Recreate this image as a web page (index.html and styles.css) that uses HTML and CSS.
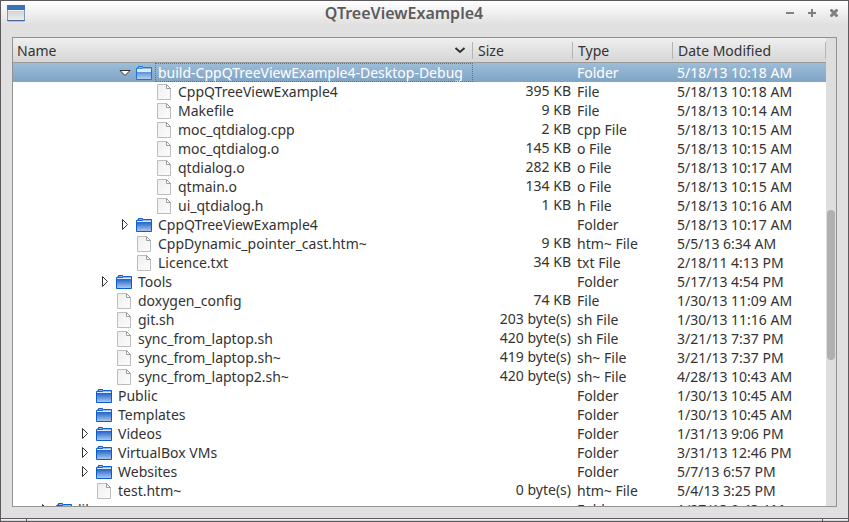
FILE: index.html
```
<!DOCTYPE html>
<html lang="en">
<head>
<meta charset="utf-8">
<title>QTreeViewExample4</title>
<link rel="stylesheet" href="styles.css">
<script src="tree.js" defer></script>
</head>
<body>
<svg class="defs" aria-hidden="true">
  <defs>
    <linearGradient id="blue" x1="0" y1="0" x2="0" y2="1"><stop offset=".25" stop-color="#1c5fc4"/><stop offset="1" stop-color="#b0cdf3"/></linearGradient>
    <linearGradient id="pale" x1="0" y1="0" x2="0" y2="1"><stop offset=".35" stop-color="#4a8ad8"/><stop offset="1" stop-color="#b8d4f4"/></linearGradient>
    <linearGradient id="paper" x1="0" y1="0" x2="1" y2="1"><stop offset="0" stop-color="#eeeeee"/><stop offset="1" stop-color="#fdfdfd"/></linearGradient>
    <linearGradient id="pane" x1="0" y1="0" x2="0" y2="1"><stop offset="0" stop-color="#c8c8c8"/><stop offset="1" stop-color="#ececec"/></linearGradient>
  </defs>
  <symbol id="folder" viewBox="0 0 16 14">
    <path d="M.5 13.5V2.5H1.500L2.500 .5H6.500L7.500 1.500H15.500V13.500Z" fill="url(#blue)" stroke="#0b5ccc"/>
    <path d="M1 3H15V4H1Z" fill="#dcebfc"/><path d="M3 1.500H6L7 2.500H15" fill="none" stroke="#8fbcf0"/>
  </symbol>
  <symbol id="folder-open" viewBox="0 0 16 14">
    <path d="M.5 13.5V2.5H1.500L2.500 .5H6.500L7.500 1.500H15.500V13.500Z" fill="url(#pale)" stroke="#2375cc"/>
    <path d="M1 3H15V6H1Z" fill="#dceafa"/><path d="M3 1.500H6L7 2.500H15" fill="none" stroke="#8dbbed"/>
  </symbol>
  <symbol id="file" viewBox="0 0 16 16">
    <path d="M1.500 .5H10.500L14.500 4.500V15.500H1.500Z" fill="url(#paper)" stroke="#bdbdbd"/>
    <path d="M10.500 .5V4.500H14.500Z" fill="#fff" stroke="#9c9c9c"/>
  </symbol>
  <symbol id="closed" viewBox="0 0 8 13"><path d="M1.500 1.500V11.500L6.500 6.500Z" fill="#fff" stroke="#333"/></symbol>
  <symbol id="opened" viewBox="0 0 12 8"><path d="M1 1.500H11L6 6.500Z" fill="#fff" stroke="#333"/></symbol>
</svg>
<main class="window">
  <header class="titlebar">
    <svg class="app-icon" viewBox="0 0 18 17" aria-hidden="true">
      <path d="M.5 .5H17.500V16H.5Z" fill="url(#pane)" stroke="#8496b0"/><path d="M0 0H18V5H0Z" fill="#3c72b8"/><path d="M1 5.500H17" stroke="#edf3fa"/><path d="M0 15.500H18" stroke="#4a6ba0"/>
    </svg>
    <h1>QTreeViewExample4</h1>
    <div class="controls">
      <button type="button" aria-label="Minimize"><svg viewBox="0 0 8 8"><path d="M0 4H8"/></svg></button>
      <button type="button" aria-label="Maximize"><svg viewBox="0 0 8 8"><path d="M0 4H8M4 0V8"/></svg></button>
      <button type="button" aria-label="Close"><svg viewBox="0 0 8 8"><path d="M.5 .5L7.500 7.500M7.500 .5L.5 7.500" stroke-width="3"/></svg></button>
    </div>
  </header>
  <section class="tree">
    <div class="view">
      <table>
        <colgroup><col><col class="col-small"><col class="col-small"><col class="col-date"></colgroup>
        <thead><tr>
          <th scope="col"><div class="sort">Name<svg viewBox="0 0 12 8" aria-hidden="true"><path d="M1.500 2L6 6L10.500 2"/></svg></div></th>
          <th scope="col">Size</th><th scope="col">Type</th><th scope="col">Date Modified</th>
        </tr></thead>
        <tbody id="rows"></tbody>
      </table>
    </div>
    <div class="scrollbar"><div class="thumb"></div></div>
  </section>
  <footer class="grip"></footer>
</main>
</body>
</html>
```
FILE: tree.js
```
// level, arrow, name, size, type, date
const entries = [
  [4, "opened", "build-CppQTreeViewExample4-Desktop-Debug", "", "Folder", "5/18/13 10:18 AM"],
  [5, "", "CppQTreeViewExample4", "395 KB", "File", "5/18/13 10:18 AM"],
  [5, "", "Makefile", "9 KB", "File", "5/18/13 10:14 AM"],
  [5, "", "moc_qtdialog.cpp", "2 KB", "cpp File", "5/18/13 10:15 AM"],
  [5, "", "moc_qtdialog.o", "145 KB", "o File", "5/18/13 10:15 AM"],
  [5, "", "qtdialog.o", "282 KB", "o File", "5/18/13 10:17 AM"],
  [5, "", "qtmain.o", "134 KB", "o File", "5/18/13 10:15 AM"],
  [5, "", "ui_qtdialog.h", "1 KB", "h File", "5/18/13 10:16 AM"],
  [4, "closed", "CppQTreeViewExample4", "", "Folder", "5/18/13 10:17 AM"],
  [4, "", "CppDynamic_pointer_cast.htm~", "9 KB", "htm~ File", "5/5/13 6:34 AM"],
  [4, "", "Licence.txt", "34 KB", "txt File", "2/18/11 4:13 PM"],
  [3, "closed", "Tools", "", "Folder", "5/17/13 4:54 PM"],
  [3, "", "doxygen_config", "74 KB", "File", "1/30/13 11:09 AM"],
  [3, "", "git.sh", "203 byte(s)", "sh File", "1/30/13 11:16 AM"],
  [3, "", "sync_from_laptop.sh", "420 byte(s)", "sh File", "3/21/13 7:37 PM"],
  [3, "", "sync_from_laptop.sh~", "419 byte(s)", "sh~ File", "3/21/13 7:37 PM"],
  [3, "", "sync_from_laptop2.sh~", "420 byte(s)", "sh~ File", "4/28/13 10:43 AM"],
  [2, "", "Public", "", "Folder", "1/30/13 10:45 AM"],
  [2, "", "Templates", "", "Folder", "1/30/13 10:45 AM"],
  [2, "closed", "Videos", "", "Folder", "1/31/13 9:06 PM"],
  [2, "closed", "VirtualBox VMs", "", "Folder", "3/31/13 12:46 PM"],
  [2, "closed", "Websites", "", "Folder", "5/7/13 6:57 PM"],
  [2, "", "test.htm~", "0 byte(s)", "htm~ File", "5/4/13 3:25 PM"],
  [0, "closed", "lib", "", "Folder", "1/27/13 9:43 AM"]
];

document.getElementById("rows").innerHTML = entries.map(([level, arrow, name, size, type, date]) => {
  const icon = type !== "Folder" ? "file" : arrow === "opened" ? "folder-open" : "folder";
  const toggle = arrow
    ? `<button type="button" class="toggle" aria-label="${name}"><svg class="${arrow}"><use href="#${arrow}"/></svg></button>`
    : `<span class="toggle"></span>`;
  return `<tr class="${arrow === "opened" ? "selected" : ""}">
    <td><div class="name level-${level}">${toggle}<svg class="${icon}"><use href="#${icon}"/></svg><span class="label">${name}</span></div></td>
    <td class="size">${size}</td><td>${type}</td><td>${date}</td></tr>`;
}).join("");
```
FILE: styles.css
```
* { box-sizing: border-box; }
body { margin: 0; font: 14px/19px "Noto Sans", "Open Sans", sans-serif; color: #333; background: #e0e0e0; }
button { padding: 0; border: 0; color: inherit; background: none; }
.defs { position: absolute; width: 0; height: 0; }
.window { display: flex; flex-direction: column; height: 100vh; border: 1px solid #5c5a5c; background: #e0e0e0; }

.titlebar { display: grid; grid-template-columns: 40px 1fr 80px; align-items: center; height: 24px; flex: none; padding: 0 7px 0 6px; background: linear-gradient(#fff, #e0e0e0); }
.app-icon { width: 18px; height: 17px; }
.titlebar h1 { margin: 0; font-size: 16px; font-weight: 600; line-height: 24px; color: #5c5c5c; text-align: center; }
.controls { display: flex; justify-content: flex-end; gap: 8px; }
.controls button { display: flex; align-items: center; justify-content: center; width: 14px; height: 14px; }
.controls svg { width: 8px; height: 8px; fill: none; stroke: #808080; stroke-width: 2; }

.tree { display: flex; flex: 1; min-height: 0; margin: 12px 11px 11px; border: 1px solid #929292; background: #fff; overflow: hidden; }
.view { flex: 1; min-width: 0; overflow: hidden; }
table { width: 100%; table-layout: fixed; border-collapse: separate; border-spacing: 0; }
.col-small { width: 100px; }
.col-date { width: 153px; }
th { height: 25px; padding: 0 5px; font-weight: normal; text-align: left; border-bottom: 1px solid #999; background: linear-gradient(90deg, #b4b4b4, #b4b4b4) right 4px / 1px 17px no-repeat, linear-gradient(#efefef, #d6d6d6); }
th:first-child { padding-left: 4px; }
.sort { display: flex; align-items: center; justify-content: space-between; }
.sort svg { width: 12px; height: 8px; margin-right: 2px; fill: none; stroke: #333; stroke-width: 2; }

td { height: 19px; padding: 0 4px; white-space: nowrap; vertical-align: top; }
td:first-child { padding: 0; }
.size { padding-right: 2px; line-height: 17px; text-align: right; }
.name { display: flex; align-items: center; height: 19px; }
.name svg { flex: none; }
.level-0 { padding-left: 23px; }
.level-2 { padding-left: 63px; }
.level-3 { padding-left: 83px; }
.level-4 { padding-left: 103px; }
.level-5 { padding-left: 123px; }
.toggle { display: flex; align-items: center; justify-content: center; flex: none; width: 20px; height: 19px; padding-right: 2px; }
.closed { width: 8px; height: 13px; }
.opened { width: 12px; height: 8px; }
.folder, .folder-open { width: 16px; height: 14px; }
.file { width: 16px; height: 16px; }
.label { flex: 1; height: 19px; margin-left: 3px; padding-left: 3px; line-height: 19px; }
.selected { color: #fff; background: linear-gradient(#9dbdd8, #7fa4c4); }
.selected .label { outline: 1px dotted #66727c; outline-offset: -1px; }

.scrollbar { display: flex; flex: none; width: 10px; padding: 0 1px; background: #dedede; }
.thumb { width: 8px; height: 32%; margin-top: 172px; border-radius: 4px; background: #b0b0b0; }
.grip { height: 3px; flex: none; border-top: 1px solid #5c5a5c; background: linear-gradient(90deg, #5c5a5c, #5c5a5c) 25px 0 / 1px 3px no-repeat, linear-gradient(90deg, #5c5a5c, #5c5a5c) calc(100% - 25px) 0 / 1px 3px no-repeat, linear-gradient(#fff, #c8c8c8); }
```
